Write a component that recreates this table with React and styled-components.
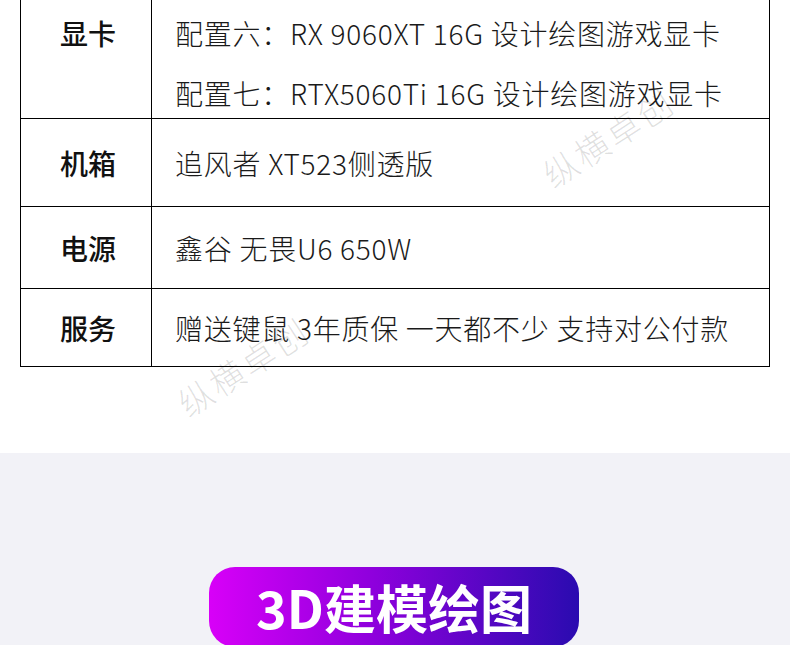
import React from "react";
import styled, { createGlobalStyle } from "styled-components";

const Global = createGlobalStyle`
  html, body { margin: 0; padding: 0; background: #ffffff; }
  body { font-family: "Noto Sans CJK SC", "Noto Sans", sans-serif; }
`;

const Page = styled.div`
  position: relative;
  width: 790px;
  height: 645px;
  overflow: hidden;
`;

const Table = styled.div`
  margin: 0 20px;
  width: 750px;
  box-sizing: border-box;
  border-left: 1px solid #000;
  border-right: 1px solid #000;
`;

const Row = styled.div`
  display: grid;
  grid-template-columns: 131px 1fr;
  height: ${(p) => p.$h}px;
  box-sizing: border-box;
  border-bottom: 1px solid #000;
  align-items: ${(p) => (p.$top ? "start" : "center")};
`;

const Label = styled.div`
  height: 100%;
  box-sizing: border-box;
  border-right: 1px solid #000;
  display: flex;
  justify-content: center;
  align-items: ${(p) => (p.$top ? "flex-start" : "center")};
  padding-top: ${(p) => (p.$top ? p.$pt : 0)}px;
  padding-left: 4px;
  font-size: 28px;
  line-height: 40px;
  font-weight: 500;
  color: #111;
`;

const Content = styled.div`
  display: flex;
  flex-direction: column;
  gap: 20px;
  padding-left: 23px;
  padding-top: ${(p) => p.$pt || 0}px;
  font-size: 28px;
  line-height: 40px;
  font-weight: 300;
  letter-spacing: 0.75px;
  color: #1a1a1a;
  white-space: nowrap;
`;

const Line = styled.div``;

const Mark = styled.span`
  position: absolute;
  left: ${(p) => p.$x}px;
  top: ${(p) => p.$y}px;
  transform: translate(-50%, -50%) rotate(-33deg);
  font-size: 34px;
  font-weight: 300;
  letter-spacing: 3px;
  color: rgba(0, 0, 0, 0.12);
  white-space: nowrap;
  pointer-events: none;
`;

const Spacer = styled.div`
  height: 86px;
`;

const Section = styled.div`
  background: #f2f2f7;
  height: 192px;
  padding-top: 114px;
  box-sizing: border-box;
  display: flex;
  justify-content: center;
  overflow: hidden;
`;

const Badge = styled.div`
  flex: none;
  width: 370px;
  height: 80px;
  margin-right: 2px;
  border-radius: 26px;
  background: linear-gradient(90deg, #d800f8 0%, #8d00dc 45%, #2a0bb0 100%);
  color: #fff;
  font-size: 52px;
  line-height: 80px;
  font-weight: 700;
  text-align: center;
`;

const rows = [
  { label: "机箱", h: 88, lines: ["追风者 XT523侧透版"] },
  { label: "电源", h: 82, lines: ["鑫谷 无畏U6 650W"] },
  { label: "服务", h: 78, lines: ["赠送键鼠 3年质保 一天都不少 支持对公付款"] },
];

export default function App() {
  return (
    <>
      <Global />
      <Page>
        <Table>
          <Row $h={119} $top>
            <Label $top $pt={13}>显卡</Label>
            <Content $pt={13}>
              <Line>配置六：RX 9060XT 16G 设计绘图游戏显卡</Line>
              <Line>配置七：RTX5060Ti 16G 设计绘图游戏显卡</Line>
            </Content>
          </Row>
          {rows.map((r) => (
            <Row key={r.label} $h={r.h}>
              <Label>{r.label}</Label>
              <Content>
                {r.lines.map((l) => (
                  <Line key={l}>{l}</Line>
                ))}
              </Content>
            </Row>
          ))}
        </Table>
        <Spacer />
        <Section>
          <Badge>3D建模绘图</Badge>
        </Section>
        <Mark $x={608} $y={137}>纵横卓创</Mark>
        <Mark $x={243} $y={366}>纵横卓创</Mark>
      </Page>
    </>
  );
}
